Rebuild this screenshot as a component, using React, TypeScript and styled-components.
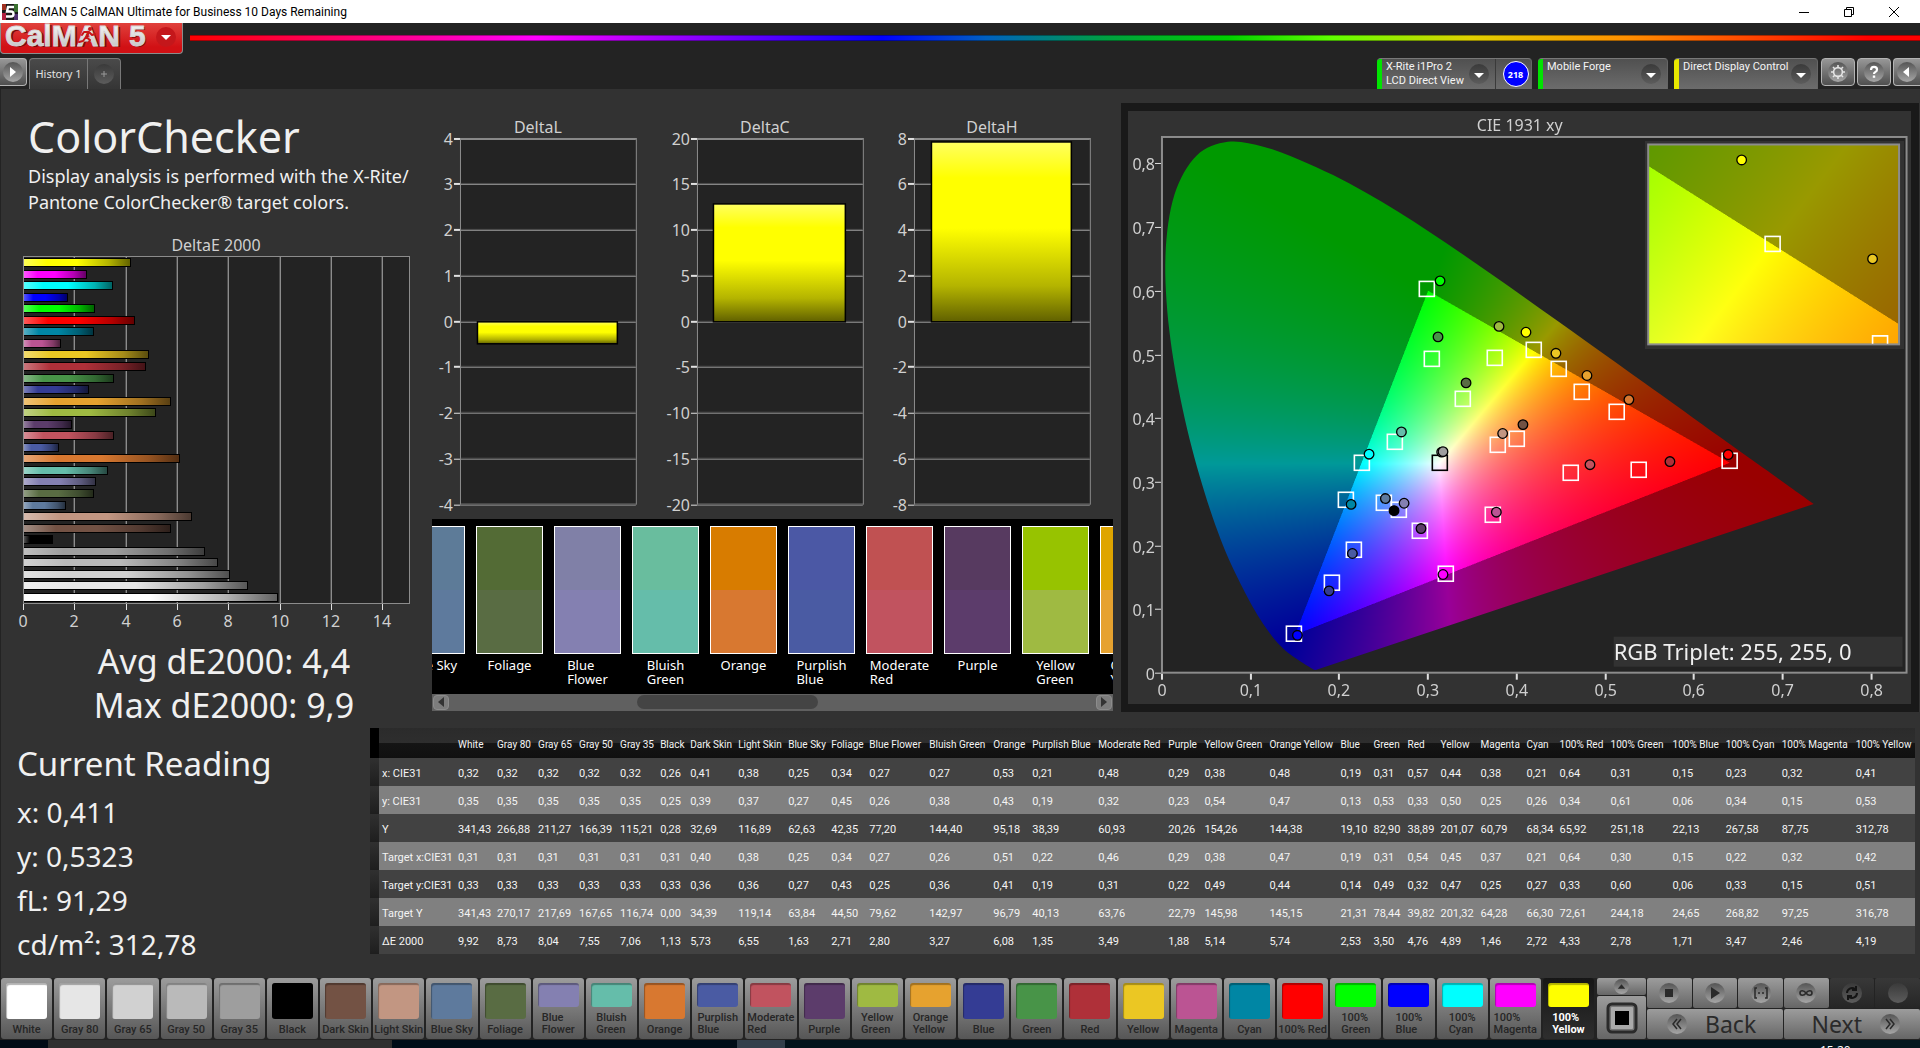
import React, { useEffect, useRef } from "react";
import styled, { createGlobalStyle, css } from "styled-components";

const UI = `"Noto Sans", "Open Sans", sans-serif`;
const COMPACT = `Roboto, "Noto Sans", sans-serif`;

const GlobalStyle = createGlobalStyle`
  *, *::before, *::after { box-sizing: border-box; }
  body { margin: 0; background: #232323; color: #f0f0f0; font-family: ${UI}; overflow: hidden; }
  button { font-family: inherit; margin: 0; padding: 0; border: 0; color: inherit; cursor: pointer; }
  h1, h2, p { margin: 0; font-weight: 400; }
`;

/* ---------- data ---------- */

type Patch = { name: string; label?: string; color: string; top?: string; v: string[] };

const patches: Patch[] = [
  { name: "White", color: "#ffffff", v: ["0,32", "0,35", "341,43", "0,31", "0,33", "341,43", "9,92"] },
  { name: "Gray 80", color: "#e6e6e6", v: ["0,32", "0,35", "266,88", "0,31", "0,33", "270,17", "8,73"] },
  { name: "Gray 65", color: "#d1d1d1", v: ["0,32", "0,35", "211,27", "0,31", "0,33", "217,69", "8,04"] },
  { name: "Gray 50", color: "#bababa", v: ["0,32", "0,35", "166,39", "0,31", "0,33", "167,65", "7,55"] },
  { name: "Gray 35", color: "#9e9e9e", v: ["0,32", "0,35", "115,21", "0,31", "0,33", "116,74", "7,06"] },
  { name: "Black", color: "#000000", v: ["0,26", "0,25", "0,28", "0,31", "0,33", "0,00", "1,13"] },
  { name: "Dark Skin", color: "#735244", v: ["0,41", "0,39", "32,69", "0,40", "0,36", "34,39", "5,73"] },
  { name: "Light Skin", color: "#c29682", v: ["0,38", "0,37", "116,89", "0,38", "0,36", "119,14", "6,55"] },
  { name: "Blue Sky", color: "#5e7a9d", top: "#5d7b98", v: ["0,25", "0,27", "62,63", "0,25", "0,27", "63,84", "1,63"] },
  { name: "Foliage", color: "#596c43", top: "#536b35", v: ["0,34", "0,45", "42,35", "0,34", "0,43", "44,50", "2,71"] },
  { name: "Blue Flower", label: "Blue\nFlower", color: "#8480b1", top: "#8080a7", v: ["0,27", "0,26", "77,20", "0,27", "0,25", "79,62", "2,80"] },
  { name: "Bluish Green", label: "Bluish\nGreen", color: "#65bdaa", top: "#69bd9e", v: ["0,27", "0,38", "144,40", "0,26", "0,36", "142,97", "3,27"] },
  { name: "Orange", color: "#d87830", top: "#d87c00", v: ["0,53", "0,43", "95,18", "0,51", "0,41", "96,79", "6,08"] },
  { name: "Purplish Blue", label: "Purplish\nBlue", color: "#4a5ba3", top: "#4b58a5", v: ["0,21", "0,19", "38,39", "0,22", "0,19", "40,13", "1,35"] },
  { name: "Moderate Red", label: "Moderate\nRed", color: "#c1535f", top: "#c05152", v: ["0,48", "0,32", "60,93", "0,46", "0,31", "63,76", "3,49"] },
  { name: "Purple", color: "#5c3c6b", top: "#573a60", v: ["0,29", "0,23", "20,26", "0,29", "0,22", "22,79", "1,88"] },
  { name: "Yellow Green", label: "Yellow\nGreen", color: "#9fba42", top: "#97c300", v: ["0,38", "0,54", "154,26", "0,38", "0,49", "145,98", "5,14"] },
  { name: "Orange Yellow", label: "Orange\nYellow", color: "#e6a22f", top: "#dfa500", v: ["0,48", "0,47", "144,38", "0,47", "0,44", "145,15", "5,74"] },
  { name: "Blue", color: "#343c94", v: ["0,19", "0,13", "19,10", "0,19", "0,14", "21,31", "2,53"] },
  { name: "Green", color: "#489448", v: ["0,31", "0,53", "82,90", "0,31", "0,49", "78,44", "3,50"] },
  { name: "Red", color: "#af3039", v: ["0,57", "0,33", "38,89", "0,54", "0,32", "39,82", "4,76"] },
  { name: "Yellow", color: "#ebc723", v: ["0,44", "0,50", "201,07", "0,45", "0,47", "201,32", "4,89"] },
  { name: "Magenta", color: "#bb5493", v: ["0,38", "0,25", "60,79", "0,37", "0,25", "64,28", "1,46"] },
  { name: "Cyan", color: "#0086a4", v: ["0,21", "0,26", "68,34", "0,21", "0,27", "66,30", "2,72"] },
  { name: "100% Red", color: "#ff0000", v: ["0,64", "0,34", "65,92", "0,64", "0,33", "72,61", "4,33"] },
  { name: "100% Green", label: "100%\nGreen", color: "#00ff00", v: ["0,31", "0,61", "251,18", "0,30", "0,60", "244,18", "2,78"] },
  { name: "100% Blue", label: "100%\nBlue", color: "#0000ff", v: ["0,15", "0,06", "22,13", "0,15", "0,06", "24,65", "1,71"] },
  { name: "100% Cyan", label: "100%\nCyan", color: "#00ffff", v: ["0,23", "0,34", "267,58", "0,22", "0,33", "268,82", "3,47"] },
  { name: "100% Magenta", label: "100%\nMagenta", color: "#ff00ff", v: ["0,32", "0,15", "87,75", "0,32", "0,15", "97,25", "2,46"] },
  { name: "100% Yellow", label: "100%\nYellow", color: "#ffff00", v: ["0,41", "0,53", "312,78", "0,42", "0,51", "316,78", "4,19"] },
];

const rowNames = ["x: CIE31", "y: CIE31", "Y", "Target x:CIE31", "Target y:CIE31", "Target Y", "ΔE 2000"];

const columnWidths = [
  9, 76, 39, 41, 41, 41, 40, 30, 48, 50, 43, 38, 60, 64, 39, 66, 70, 36, 65, 71, 33, 34, 33, 40, 46, 33, 51, 62, 53,
  56, 74, 62,
];

const toNumber = (s: string) => parseFloat(s.replace(",", "."));

const mix = (hex: string, target: number, amount: number) => {
  const n = parseInt(hex.slice(1), 16);
  const part = (shift: number) => Math.round(((n >> shift) & 255) * (1 - amount) + target * amount);
  return `rgb(${part(16)},${part(8)},${part(0)})`;
};

/* ---------- window frame ---------- */

const Window = styled.div`
  display: flex;
  flex-direction: column;
  height: 100vh;
  background: #232323;
`;

const TitleBar = styled.header`
  display: flex;
  align-items: center;
  height: 23px;
  padding: 0 4px 0 2px;
  background: #fff;
  color: #000;
`;

const TitleText = styled.span`
  flex: 1;
  padding-left: 5px;
  font-family: ${COMPACT};
  font-size: 12px;
`;

const CaptionButton = styled.button`
  display: flex;
  align-items: center;
  justify-content: center;
  width: 45px;
  height: 20px;
  background: transparent;
`;

const Brand = styled.div`
  display: flex;
  align-items: center;
  height: 31px;
`;

const LogoButton = styled.button`
  display: block;
  width: 183px;
  height: 31px;
  background: linear-gradient(#e0413c, #d11014 80%);
  border: 1px solid #8c8c8c;
  border-top: 0;
  border-radius: 0 0 4px 4px;
  overflow: hidden;
`;

const Rainbow = styled.div`
  flex: 1;
  height: 6px;
  margin: 0 0 1px 7px;
  border: solid rgba(0, 0, 0, 0.35);
  border-width: 1px 0;
  background: linear-gradient(90deg, #ff0000 0%, #ff00a8 14%, #ff00ff 20%, #8000ff 30%, #0000ff 40%, #0060c0 46%, #00a040 53%, #00d000 60%, #60ff00 66%, #e0d000 74%, #ff9000 83%, #ff0000 97%) border-box;
`;

const TabRow = styled.nav`
  display: flex;
  align-items: flex-end;
  height: 35px;
`;

const silver = css`
  background: linear-gradient(#979797, #4f4f4f);
  border: 1px solid #b4b4b4;
  border-radius: 4px;
`;

const ToolButton = styled.button<{ $w: number; $side?: "left" | "right" }>`
  ${silver}
  display: flex;
  align-items: center;
  justify-content: center;
  align-self: flex-start;
  width: ${(p) => p.$w}px;
  height: 28px;
  margin-top: 4px;
  ${(p) => p.$side === "left" && "border-left: 0; border-radius: 0 4px 4px 0;"}
  ${(p) => p.$side === "right" && "border-right: 0; border-radius: 4px 0 0 4px;"}
`;

const HistoryTabs = styled.div`
  display: flex;
  height: 31px;
  margin-left: 2px;
  border: 1px solid #787878;
  border-bottom: 0;
  border-radius: 4px 4px 0 0;
  background: linear-gradient(#4a4a4a, #353535);
`;

const HistoryTab = styled.button`
  width: 58px;
  padding-bottom: 2px;
  background: transparent;
  border-right: 1px solid #787878;
  color: #e2e2e2;
  font-size: 11px;
`;

const AddTab = styled.button`
  display: flex;
  align-items: center;
  justify-content: center;
  width: 32px;
  background: transparent;
`;

const Devices = styled.div`
  display: flex;
  flex: 1;
  justify-content: flex-end;
  align-items: flex-end;
  gap: 6px;
`;

const DeviceTab = styled.div<{ $w: number }>`
  display: flex;
  width: ${(p) => p.$w}px;
  height: 31px;
  border-top: 1px solid #787878;
  border-right: 1px solid #666;
  border-radius: 4px 4px 0 0;
  background: linear-gradient(#505050, #6c6c6c);
  overflow: hidden;
`;

const Status = styled.span<{ $color: string }>`
  width: 5px;
  background: ${(p) => p.$color};
`;

const DeviceName = styled.button`
  display: flex;
  flex: 1;
  align-items: center;
  justify-content: space-between;
  padding: 0 6px 0 4px;
  background: transparent;
  color: #f4f4f4;
  font-family: ${COMPACT};
  font-size: 11px;
  line-height: 14px;
  text-align: left;
  white-space: nowrap;
`;

const DeviceLines = styled.span`
  align-self: flex-start;
  width: 78px;
  padding-top: 1px;
  white-space: pre;
`;

const Counter = styled.div`
  display: flex;
  align-items: center;
  justify-content: center;
  width: 36px;
  padding-left: 4px;
  border-left: 1px solid #3a3a3a;
`;

const CounterDisc = styled.span`
  display: flex;
  align-items: center;
  justify-content: center;
  width: 26px;
  height: 26px;
  border: 1px solid #fff;
  border-radius: 50%;
  background: #0000ff;
  color: #fff;
  font-size: 9px;
  font-weight: 700;
`;

const Tools = styled.div`
  display: flex;
  align-self: stretch;
  gap: 2px;
  margin-left: 3px;
`;

/* ---------- page ---------- */

const Page = styled.main`
  display: flex;
  flex: 1;
  flex-direction: column;
  min-height: 0;
  background: #323232;
  border-left: 1px solid #232323;
`;

const Upper = styled.section`
  display: grid;
  grid-template-columns: 424px minmax(0, 696fr) minmax(0, 798fr);
  align-items: start;
`;

const Intro = styled.div`
  padding: 22px 0 0 27px;
`;

const Heading = styled.h1`
  font-size: 43px;
  line-height: 52px;
`;

const Lead = styled.p`
  font-size: 18px;
  line-height: 26px;
  white-space: nowrap;
`;

const DeltaEBox = styled.figure`
  margin: 21px 0 13px -28px;
`;

const Chart = styled.svg`
  display: block;
  width: 100%;
  height: auto;
  font-family: ${UI};
  font-size: 16px;
  fill: #d0d0d0;
`;

const Summary = styled.div`
  display: flex;
  flex-direction: column;
  align-items: center;
  gap: 12px;
  padding-right: 4px;
  margin-left: -27px;
  width: 450px;
`;

const Big = styled.p`
  font-size: 34px;
  line-height: 32px;
`;

const Middle = styled.div`
  padding: 22px 8px 0 0;
`;

const DeltaRow = styled.div`
  display: grid;
  grid-template-columns: repeat(3, minmax(0, 1fr));
  padding-right: 8px;
`;

const Strip = styled.div`
  margin-left: 7px;
  background: #000;
  overflow: hidden;
`;

const StripTrack = styled.div`
  display: flex;
  gap: 11px;
  height: 175px;
  margin-left: -34px;
  padding-top: 7px;
`;

const Pair = styled.div`
  display: flex;
  flex: none;
  flex-direction: column;
  align-items: center;
  width: 67px;
`;

const PairColors = styled.div<{ $top: string; $bottom: string }>`
  width: 100%;
  height: 128px;
  border: 1px solid #fff;
  background: linear-gradient(${(p) => p.$top} 50%, ${(p) => p.$bottom} 50%);
`;

const PairLabel = styled.span`
  margin-top: 4px;
  color: #fff;
  font-size: 13px;
  line-height: 14px;
  white-space: pre;
`;

const ScrollBar = styled.div`
  display: flex;
  align-items: center;
  justify-content: space-between;
  height: 17px;
  padding: 0 1px;
  background: #606060;
`;

const ScrollArrow = styled.button`
  display: flex;
  align-items: center;
  justify-content: center;
  width: 16px;
  height: 15px;
  border: 1px solid #8c8c8c;
  border-radius: 4px;
  background: #7c7c7c;
`;

const ScrollRail = styled.div`
  flex: 1;
  height: 14px;
`;

const ScrollThumb = styled.div`
  width: 28%;
  height: 14px;
  margin-left: 29%;
  border-radius: 7px;
  background: #444;
`;

const CiePanel = styled.figure`
  display: grid;
  margin: 14px 1px 0 0;
  padding: 0;
  border: solid #191919;
  border-width: 8px 8px 8px 7px;
`;

const CieCanvas = styled.canvas`
  grid-area: 1 / 1;
  width: 100%;
  height: auto;
`;

const CieOverlay = styled(Chart)`
  grid-area: 1 / 1;
`;

const Lower = styled.section`
  display: flex;
  align-items: flex-start;
  padding: 7px 5px 0 0;
`;

const Reading = styled.div`
  flex: none;
  width: 369px;
  padding: 14px 0 0 16px;
`;

const ReadingTitle = styled.h2`
  margin-bottom: 4px;
  font-size: 33px;
  line-height: 44px;
`;

const ReadingLine = styled.p`
  font-size: 28px;
  line-height: 44px;
`;

const Table = styled.table`
  flex: 1;
  width: 100%;
  table-layout: fixed;
  border-collapse: collapse;
  font-family: ${COMPACT};
  color: #f4f4f4;
`;

const HeadCell = styled.th<{ $strip?: boolean }>`
  height: 30px;
  padding: 2px 0 0 3px;
  background: ${(p) => (p.$strip ? "#000" : "linear-gradient(#2b2b2b, #2e2e2e 50%, #151515 50%, #101010)")};
  font-size: 10px;
  font-weight: 400;
  text-align: left;
  white-space: nowrap;
`;

const Row = styled.tr`
  height: 28px;
  background: #424242;
  &:nth-child(even) {
    background: #808080;
  }
`;

const StripCell = styled.td`
  padding: 0;
  background: linear-gradient(#303030, #1e1e1e);
`;

const RowHead = styled.th`
  padding: 2px 0 0 3px;
  font-size: 11px;
  font-weight: 400;
  text-align: left;
  white-space: nowrap;
`;

const Cell = styled.td`
  padding: 2px 0 0 3px;
  font-size: 11px;
  white-space: nowrap;
`;

/* ---------- footer ---------- */

const Footer = styled.footer`
  display: flex;
  height: 61px;
  gap: 1px;
  background: #232323;
`;

const PatchBar = styled.div`
  display: grid;
  flex: 1;
  grid-template-columns: repeat(30, minmax(0, 1fr));
  gap: 2px;
  padding: 0 2px 0 1px;
`;

const PatchButton = styled.button<{ $active?: boolean }>`
  display: flex;
  flex-direction: column;
  align-items: center;
  padding: 5px 0 3px;
  border-radius: 3px;
  background: ${(p) => (p.$active ? "linear-gradient(#161616, #2e2e2e)" : "linear-gradient(#9c9c9c, #565656)")};
  color: ${(p) => (p.$active ? "#fff" : "#262626")};
  font-family: ${COMPACT};
  font-size: 11px;
  font-weight: ${(p) => (p.$active ? 700 : 500)};
  line-height: 12px;
  text-align: left;
  white-space: pre;
`;

const PatchColor = styled.span<{ $color: string }>`
  flex: 1;
  width: 80%;
  margin-bottom: 5px;
  border-radius: 3px;
  background: ${(p) => p.$color};
  box-shadow: inset 1px 2px 1px rgba(0, 0, 0, 0.3);
`;

const PickerColumn = styled.div`
  display: flex;
  flex-direction: column;
  gap: 1px;
  width: 49px;
`;

const MetalButton = styled.button<{ $h?: number; $dark?: boolean }>`
  display: flex;
  align-items: center;
  justify-content: center;
  ${(p) => (p.$h ? `height: ${p.$h}px;` : "flex: 1;")}
  background: ${(p) => (p.$dark ? "linear-gradient(#383838, #262626)" : "linear-gradient(#9c9c9c, #666)")};
  border-radius: 2px;
`;

const Transport = styled.div`
  display: flex;
  flex-direction: column;
  gap: 1px;
  width: 273px;
`;

const TransportRow = styled.div`
  display: flex;
  flex: 1;
  gap: 1px;
`;

const NavButton = styled(MetalButton)<{ $to: "back" | "next" }>`
  justify-content: ${(p) => (p.$to === "back" ? "flex-start" : "flex-end")};
  gap: 18px;
  padding: 0 20px;
  color: #2a2a2a;
  font-size: 23px;
  line-height: 28px;
`;

const Taskbar = styled.div`
  display: flex;
  flex: none;
  height: 9px;
  padding-top: 1px;
  background: #232323;
  overflow: hidden;
`;

const TaskSegment = styled.span<{ $grow: number; $color: string }>`
  flex: ${(p) => p.$grow} 1 0;
  background: ${(p) => p.$color};
`;

const Clock = styled.span`
  width: 100px;
  padding-top: 3px;
  background: #05181f;
  color: #fff;
  font-size: 12px;
  line-height: 16px;
`;

/* ---------- icons ---------- */

const Orb = ({ size = 20, dark, children }: { size?: number; dark?: boolean; children?: React.ReactNode }) => (
  <svg width={size} height={size} viewBox="0 0 20 20" aria-hidden="true">
    <defs>
      <linearGradient id={dark ? "orbDark" : "orbLight"} x1="0" y1="0" x2="0" y2="1">
        <stop offset="0" stopColor={dark ? "#3a3a3a" : "#555"} />
        <stop offset="1" stopColor={dark ? "#5c5c5c" : "#a6a6a6"} />
      </linearGradient>
    </defs>
    <circle cx="10" cy="10" r="10" fill={`url(#${dark ? "orbDark" : "orbLight"})`} />
    {children}
  </svg>
);

const DownArrow = () => (
  <Orb dark>
    <path d="M5 9h10l-5 5z" fill="#fff" />
  </Orb>
);

const Logo = () => (
  <svg width="181" height="30" viewBox="0 0 181 30" aria-label="CalMAN 5">
    <defs>
      <linearGradient id="silver" x1="0" y1="0" x2="0" y2="1">
        <stop offset="0" stopColor="#ffffff" />
        <stop offset="1" stopColor="#bdbdbd" />
      </linearGradient>
    </defs>
    <g fontFamily="Liberation Sans" fontWeight="700" fontSize="30">
      <text x="6" y="24" fill="#7a0a0c">CalMAN</text>
      <text x="129" y="24" fill="#7a0a0c">5</text>
      <text x="4" y="23" fill="url(#silver)" stroke="#d8d8d8" strokeWidth="0.8">CalMAN</text>
      <text x="128" y="23" fill="url(#silver)" stroke="#d8d8d8" strokeWidth="0.8">5</text>
    </g>
    <g stroke="#c91518" strokeWidth="2" fill="none" strokeLinecap="round" strokeLinejoin="round">
      <path d="M88 9l-3 5 4 3-2 4M85 14l-3 4-4 1M88 9h-5l-2 3M88 9l3 3 3-1" />
    </g>
    <circle cx="89" cy="6" r="2" fill="#c91518" />
    <circle cx="165" cy="14" r="10" fill="#c4171b" />
    <path d="M160 12h10l-5 5z" fill="#fff" />
  </svg>
);

/* ---------- charts ---------- */

const DELTA_E_SCALE = 25.65;

const DeltaEChart = () => (
  <Chart viewBox="0 0 425 396" role="img" aria-label="DeltaE 2000">
    <defs>
      {patches.map((p, i) => (
        <linearGradient key={p.name} id={`bar${i}`}>
          <stop offset="0" stopColor={mix(p.color, 255, 0.35)} />
          <stop offset="0.22" stopColor={p.color} />
          <stop offset="0.5" stopColor={p.color} />
          <stop offset="0.8" stopColor={mix(p.color, 0, 0.3)} />
          <stop offset="1" stopColor={mix(p.color, 0, 0.62)} />
        </linearGradient>
      ))}
    </defs>
    <text x="216" y="15" textAnchor="middle">DeltaE 2000</text>
    <rect x="23.5" y="20.5" width="386" height="347" fill="#232323" stroke="#8c8c8c" />
    {[0, 2, 4, 6, 8, 10, 12, 14].map((t) => {
      const x = Math.round(23 + t * DELTA_E_SCALE);
      return (
        <g key={t}>
          {t > 0 && <rect x={x} y="21" width="1" height="346" fill="#8c8c8c" />}
          {t > 0 && <rect x={x - 1} y="21" width="1" height="346" fill="#4c4c4c" />}
          <rect x={x} y="368" width="1" height="6" fill="#e0e0e0" />
          <text x={x} y="391" textAnchor="middle">{t}</text>
        </g>
      );
    })}
    {patches.map((p, i) => {
      const y = Math.round(26 + (29 - i) * 11.55);
      return (
        <rect key={p.name} x="23.5" y={y - 3.5} width={Math.round(toNumber(p.v[6]) * DELTA_E_SCALE)} height="8"
          fill={`url(#bar${i})`} stroke="#000" />
      );
    })}
    <rect x="23" y="21" width="1" height="347" fill="#8c8c8c" />
  </Chart>
);

type DeltaProps = { title: string; left: number; step: number; value: number };

const DeltaChart = ({ title, left, step, value }: DeltaProps) => {
  const right = 211;
  const unit = 183 / (4 * step);
  const zero = 210.6;
  const end = Math.round(zero - value * unit);
  const base = Math.round(zero);
  const inset = Math.round((right - left) * 0.1);
  const id = `delta-${title}`;
  return (
    <Chart viewBox="0 0 227 408" role="img" aria-label={title}>
      <defs>
        <linearGradient id={id} x1="0" y1="0" x2="0" y2="1">
          <stop offset="0" stopColor="#ffff60" />
          <stop offset="0.2" stopColor="#ffff00" />
          <stop offset="0.48" stopColor="#ffff00" />
          <stop offset="0.8" stopColor="#b4b400" />
          <stop offset="1" stopColor="#606000" />
        </linearGradient>
      </defs>
      <text x="113" y="22" textAnchor="middle">{title}</text>
      <rect x={left + 0.5} y="27.5" width={right - left} height="366" fill="#232323" stroke="#8c8c8c" />
      {[4, 3, 2, 1, 0, -1, -2, -3, -4].map((k) => {
        const y = Math.floor(zero + 0.4 - k * step * unit);
        return (
          <g key={k}>
            <rect x={left} y={y} width={right - left} height="1" fill="#8c8c8c" />
            {k < 4 && <rect x={left + 1} y={y - 1} width={right - left - 1} height="1" fill="#505050" />}
            <rect x={left - 6} y={y - (k > -2 ? 1 : 0)} width="6" height={k > -2 ? 2 : 1} fill="#e0e0e0" />
            <text x={left - 7} y={y + 6} textAnchor="end">{k * step}</text>
          </g>
        );
      })}
      <rect x={left + inset - 0.5} y={Math.min(base, end)} width={right - left - 2 * inset}
        height={Math.abs(end - base)} fill={`url(#${id})`} stroke="#000" strokeWidth="1.5" />
    </Chart>
  );
};

/* Spectral locus, 1931 2° observer, 380–700 nm */
const locus: [number, number][] = [
  [0.1741, 0.005], [0.1738, 0.0049], [0.1733, 0.0048], [0.1726, 0.0048], [0.1714, 0.0051], [0.1689, 0.0069],
  [0.1644, 0.0109], [0.1566, 0.0177], [0.144, 0.0297], [0.1355, 0.0399], [0.1241, 0.0578], [0.1096, 0.0868],
  [0.0913, 0.1327], [0.0687, 0.2007], [0.0454, 0.295], [0.0235, 0.4127], [0.0082, 0.5384], [0.0039, 0.6548],
  [0.0139, 0.7502], [0.0389, 0.812], [0.0743, 0.8338], [0.1142, 0.8262], [0.1547, 0.8059], [0.1929, 0.7816],
  [0.2296, 0.7543], [0.2658, 0.7243], [0.3016, 0.6923], [0.3373, 0.6589], [0.3731, 0.6245], [0.4087, 0.5896],
  [0.4441, 0.5547], [0.4788, 0.5202], [0.5125, 0.4866], [0.5448, 0.4544], [0.5752, 0.4242], [0.6029, 0.3965],
  [0.627, 0.3725], [0.6482, 0.3514], [0.6658, 0.334], [0.6801, 0.3197], [0.6915, 0.3083], [0.7079, 0.292],
  [0.719, 0.2809], [0.726, 0.274], [0.7347, 0.2653],
];

const CIE = { w: 783, h: 593, left: 34, top: 26, right: 779, bottom: 562, sx: 887, sy: 637 };
const INSET = { x: 521, y: 34, w: 251, h: 200, sx: 3900, sy: 3100, cx: 644, cy: 133, x0: 0.4193, y0: 0.5053 };

const px = (x: number) => CIE.left + x * CIE.sx;
const py = (y: number) => CIE.bottom - y * CIE.sy;

const shade = (x: number, y: number): [number, number, number] => {
  const X = x / y;
  const Z = (1 - x - y) / y;
  const r = 3.2406 * X - 1.5372 - 0.4986 * Z;
  const g = -0.9689 * X + 1.8758 + 0.0415 * Z;
  const b = 0.0557 * X - 0.204 + 1.057 * Z;
  const k = (255 / Math.max(r, g, b)) * (Math.min(r, g, b) < 0 ? 0.6 : 1);
  return [Math.max(0, r) * k, Math.max(0, g) * k, Math.max(0, b) * k];
};

const renderField = (w: number, h: number, toXY: (i: number, j: number) => [number, number]) => {
  const ratio = 2;
  const field = document.createElement("canvas");
  field.width = w * ratio;
  field.height = h * ratio;
  const ctx = field.getContext("2d")!;
  const img = ctx.createImageData(field.width, field.height);
  for (let j = 0; j < field.height; j++) {
    for (let i = 0; i < field.width; i++) {
      const [x, y] = toXY((i + 0.5) / ratio, (j + 0.5) / ratio);
      const [r, g, b] = shade(x, Math.max(y, 0.0005));
      const o = (j * field.width + i) * 4;
      img.data[o] = r;
      img.data[o + 1] = g;
      img.data[o + 2] = b;
      img.data[o + 3] = 255;
    }
  }
  ctx.putImageData(img, 0, 0);
  return field;
};

type Mark = [number, number, string?];

const targets: Mark[] = [
  [0.299, 0.6026], [0.3047, 0.4925], [0.3757, 0.4943], [0.3396, 0.4295], [0.2626, 0.3616], [0.2253, 0.3291],
  [0.2077, 0.271], [0.2498, 0.2667], [0.2674, 0.2551], [0.2907, 0.2221], [0.2167, 0.1921], [0.1919, 0.1407],
  [0.3204, 0.1542], [0.149, 0.0612], [0.3734, 0.2478], [0.379, 0.3573], [0.4001, 0.3665], [0.4196, 0.5066],
  [0.4478, 0.4766], [0.4738, 0.4411], [0.5132, 0.4087], [0.4614, 0.3132], [0.538, 0.3175], [0.6402, 0.3316],
  [0.3137, 0.3291, "#000"],
];

const measured: Mark[] = [
  [0.3137, 0.6155, "#00ff00"], [0.3114, 0.5274, "#489448"], [0.3802, 0.5439, "#9fba42"], [0.343, 0.4552, "#596c43"],
  [0.2701, 0.3781, "#65bdaa"], [0.2336, 0.3432, "#00ffff"], [0.3155, 0.3465, "#e6e6e6"], [0.317, 0.3472, "#9e9e9e"],
  [0.2133, 0.2643, "#0086a4"], [0.252, 0.2735, "#5e7a9d"], [0.2618, 0.2545, "#000000"], [0.2731, 0.2661, "#8480b1"],
  [0.2922, 0.2264, "#5c3c6b"], [0.2148, 0.1872, "#4a5ba3"], [0.1885, 0.1285, "#343c94"], [0.317, 0.1542, "#ff00ff"],
  [0.1528, 0.0587, "#0000ff"], [0.3772, 0.2521, "#bb5493"], [0.3843, 0.3757, "#c29682"], [0.4072, 0.3897, "#735244"],
  [0.4106, 0.5347, "#ffff00"], [0.4444, 0.5017, "#ebc723"], [0.4794, 0.4668, "#e6a22f"], [0.5267, 0.4289, "#d87830"],
  [0.4828, 0.3267, "#c1535f"], [0.573, 0.3316, "#af3039"], [0.6387, 0.3426, "#ff0000"],
];

const Target = ({ x, y, color = "#fff" }: { x: number; y: number; color?: string }) => (
  <rect x={Math.round(x) - 7.5} y={Math.floor(y) - 7.5} width="15" height="15" fill="none" stroke={color} strokeWidth="1.6" />
);

const Dot = ({ x, y, color }: { x: number; y: number; color?: string }) => (
  <circle cx={x} cy={y} r="4.8" fill={color} stroke="#000" strokeWidth="1.3" />
);

const CieChart = () => {
  const ref = useRef<HTMLCanvasElement>(null);
  useEffect(() => {
    const ctx = ref.current!.getContext("2d")!;
    ctx.clearRect(0, 0, CIE.w, CIE.h);
    ctx.fillStyle = "#323232";
    ctx.fillRect(0, 0, CIE.w, CIE.h);
    ctx.fillStyle = "#232323";
    ctx.fillRect(CIE.left, CIE.top, CIE.right - CIE.left, CIE.bottom - CIE.top);
    ctx.save();
    ctx.beginPath();
    ctx.moveTo(px(locus[0][0]), py(locus[0][1]));
    for (let i = 0; i < locus.length - 1; i++) {
      const p0 = locus[Math.max(0, i - 1)];
      const p1 = locus[i];
      const p2 = locus[i + 1];
      const p3 = locus[Math.min(locus.length - 1, i + 2)];
      ctx.bezierCurveTo(
        px(p1[0] + (p2[0] - p0[0]) / 6), py(p1[1] + (p2[1] - p0[1]) / 6),
        px(p2[0] - (p3[0] - p1[0]) / 6), py(p2[1] - (p3[1] - p1[1]) / 6),
        px(p2[0]), py(p2[1]),
      );
    }
    ctx.closePath();
    ctx.clip();
    const w = CIE.right - CIE.left;
    const h = CIE.bottom - CIE.top;
    ctx.drawImage(renderField(w, h, (i, j) => [i / CIE.sx, (h - j) / CIE.sy]), CIE.left, CIE.top, w, h);
    ctx.restore();
    ctx.fillStyle = "#323232";
    ctx.fillRect(INSET.x - 4, INSET.y - 4, INSET.w + 8, INSET.h + 8);
    const zoomed = renderField(INSET.w, INSET.h, (i, j) => [
      INSET.x0 + (i + INSET.x - INSET.cx) / INSET.sx,
      INSET.y0 - (j + INSET.y - INSET.cy) / INSET.sy,
    ]);
    ctx.drawImage(zoomed, INSET.x, INSET.y, INSET.w, INSET.h);
  }, []);

  return (
    <CiePanel>
      <CieCanvas ref={ref} width={CIE.w} height={CIE.h} />
      <CieOverlay viewBox={`0 0 ${CIE.w} ${CIE.h}`} role="img" aria-label="CIE 1931 xy">
        <text x="392" y="20" textAnchor="middle">CIE 1931 xy</text>
        <rect x={CIE.left} y={CIE.top} width={CIE.right - CIE.left} height={CIE.bottom - CIE.top} fill="none"
          stroke="#8c8c8c" strokeWidth="2" />
        {[0, 1, 2, 3, 4, 5, 6, 7, 8].map((t) => {
          const label = t === 0 ? "0" : `0,${t}`;
          const x = Math.round(px(t / 10));
          const y = Math.round(py(t / 10));
          return (
            <g key={t}>
              <rect x={CIE.left - 7} y={y} width="6" height="1" fill="#e0e0e0" />
              <text x={CIE.left - 7} y={y + 7} textAnchor="end">{label}</text>
              <rect x={x - 1} y={CIE.bottom + 1} width="2" height="6" fill="#e0e0e0" />
              <text x={x} y={CIE.bottom + 23} textAnchor="middle">{label}</text>
            </g>
          );
        })}
        {targets.map(([x, y, c], i) => <Target key={i} x={px(x)} y={py(y)} color={c} />)}
        {measured.map(([x, y, c], i) => <Dot key={i} x={px(x)} y={py(y)} color={c} />)}
        <rect x={INSET.x - 0.5} y={INSET.y - 0.5} width={INSET.w} height={INSET.h} fill="none" stroke="#8c8c8c"
          strokeWidth="2" />
        <Target x={645} y={133} />
        <path d="M745 233v-8h15v8" fill="none" stroke="#fff" strokeWidth="1.6" />
        <Dot x={614} y={49} color="#ffff00" />
        <Dot x={745} y={148} color="#ebc723" />
        <rect x="486" y="526" width="289" height="30" fill="#323232" />
        <text x="486" y="549" fontSize="22" fill="#f0f0f0">RGB Triplet: 255, 255, 0</text>
      </CieOverlay>
    </CiePanel>
  );
};

/* ---------- sections ---------- */

const DataTable = () => (
  <Table>
    <colgroup>
      {columnWidths.map((w, i) => <col key={i} style={{ width: w }} />)}
    </colgroup>
    <thead>
      <tr>
        <HeadCell $strip />
        <HeadCell />
        {patches.map((p) => <HeadCell key={p.name} scope="col">{p.name}</HeadCell>)}
      </tr>
    </thead>
    <tbody>
      {rowNames.map((name, r) => (
        <Row key={name}>
          <StripCell />
          <RowHead scope="row">{name}</RowHead>
          {patches.map((p) => <Cell key={p.name}>{p.v[r]}</Cell>)}
        </Row>
      ))}
    </tbody>
  </Table>
);

const ink = "#2a2a2a";

export default function App() {
  return (
    <Window>
      <GlobalStyle />
      <TitleBar>
        <svg width="16" height="16" viewBox="0 0 16 16" aria-hidden="true">
          <rect width="16" height="16" fill="#1a1a1a" />
          <path d="M0 0h4v6H0z" fill="#a03020" />
          <path d="M12 0h4v8h-4z" fill="#3a7030" />
          <path d="M0 9h4v7H0z" fill="#b02040" />
          <path d="M12 10h4v6h-4z" fill="#503070" />
          <path d="M12 3H6L5 7.500h4q2.500 0 2.500 2.500T9 12.500H4" fill="none" stroke="#fff" strokeWidth="2.400" />
        </svg>
        <TitleText>CalMAN 5 CalMAN Ultimate for Business 10 Days Remaining</TitleText>
        <CaptionButton aria-label="Minimize">
          <svg width="10" height="10"><path d="M0 5.5h10" stroke="#000" /></svg>
        </CaptionButton>
        <CaptionButton aria-label="Restore">
          <svg width="10" height="10" fill="none" stroke="#000"><path d="M.5 2.5h7v7h-7zM2.5 2.5v-2h7v7h-2" /></svg>
        </CaptionButton>
        <CaptionButton aria-label="Close">
          <svg width="10" height="10"><path d="M0 0l10 10M10 0L0 10" stroke="#000" /></svg>
        </CaptionButton>
      </TitleBar>

      <Brand>
        <LogoButton aria-label="CalMAN 5 menu"><Logo /></LogoButton>
        <Rainbow />
      </Brand>

      <TabRow>
        <ToolButton $w={27} $side="left" aria-label="Show workflow">
          <Orb><path d="M7 5l6 5-6 5z" fill="#fff" /></Orb>
        </ToolButton>
        <HistoryTabs>
          <HistoryTab>History 1</HistoryTab>
          <AddTab aria-label="Add history">
            <Orb dark><path d="M10 7v6M7 10h6" stroke="#999" /></Orb>
          </AddTab>
        </HistoryTabs>
        <Devices>
          <DeviceTab $w={155}>
            <Status $color="#00e400" />
            <DeviceName><DeviceLines>{"X-Rite i1Pro 2\nLCD Direct View"}</DeviceLines><DownArrow /></DeviceName>
            <Counter><CounterDisc>218</CounterDisc></Counter>
          </DeviceTab>
          <DeviceTab $w={130}>
            <Status $color="#00e400" />
            <DeviceName><DeviceLines>Mobile Forge</DeviceLines><DownArrow /></DeviceName>
          </DeviceTab>
          <DeviceTab $w={144}>
            <Status $color="#e8e800" />
            <DeviceName><DeviceLines>Direct Display Control</DeviceLines><DownArrow /></DeviceName>
          </DeviceTab>
        </Devices>
        <Tools>
          <ToolButton $w={34} aria-label="Settings">
            <Orb>
              <circle cx="10" cy="10" r="4.4" fill="none" stroke="#e4e4e4" strokeWidth="1.6" />
              <path d="M10 3v2.4M10 14.600v2.400M3 10h2.400M14.600 10h2.400M5 5l1.700 1.700M13.300 13.300L15 15M15 5l-1.700 1.700M6.700 13.300L5 15" stroke="#e4e4e4" strokeWidth="1.600" />
            </Orb>
          </ToolButton>
          <ToolButton $w={34} aria-label="Help">
            <Orb>
              <path d="M7 8q0-3.200 3-3.200t3 2.600q0 1.600-1.500 2.500T10 12" fill="none" stroke="#fff" strokeWidth="2.200" />
              <rect x="8.800" y="13.500" width="2.400" height="2.300" fill="#fff" />
            </Orb>
          </ToolButton>
          <ToolButton $w={27} $side="right" aria-label="Show panel">
            <Orb><path d="M12 5l-6 5 6 5z" fill="#fff" /></Orb>
          </ToolButton>
        </Tools>
      </TabRow>

      <Page>
        <Upper>
          <Intro>
            <Heading>ColorChecker</Heading>
            <Lead>Display analysis is performed with the X-Rite/<br />Pantone ColorChecker® target colors.</Lead>
            <DeltaEBox><DeltaEChart /></DeltaEBox>
            <Summary>
              <Big>Avg dE2000: 4,4</Big>
              <Big>Max dE2000: 9,9</Big>
            </Summary>
          </Intro>
          <Middle>
            <DeltaRow>
              <DeltaChart title="DeltaL" left={35} step={1} value={-0.5} />
              <DeltaChart title="DeltaC" left={45} step={5} value={12.8} />
              <DeltaChart title="DeltaH" left={35} step={2} value={7.85} />
            </DeltaRow>
            <Strip>
              <StripTrack>
                {patches.slice(8, 18).map((p) => (
                  <Pair key={p.name}>
                    <PairColors $top={p.top ?? p.color} $bottom={p.color} />
                    <PairLabel>{p.label ?? p.name}</PairLabel>
                  </Pair>
                ))}
              </StripTrack>
              <ScrollBar>
                <ScrollArrow aria-label="Scroll left">
                  <svg width="6" height="10"><path d="M6 0v10L0 5z" fill="#333" /></svg>
                </ScrollArrow>
                <ScrollRail><ScrollThumb /></ScrollRail>
                <ScrollArrow aria-label="Scroll right">
                  <svg width="6" height="10"><path d="M0 0v10l6-5z" fill="#333" /></svg>
                </ScrollArrow>
              </ScrollBar>
            </Strip>
          </Middle>
          <CieChart />
        </Upper>

        <Lower>
          <Reading>
            <ReadingTitle>Current Reading</ReadingTitle>
            <ReadingLine>x: 0,411</ReadingLine>
            <ReadingLine>y: 0,5323</ReadingLine>
            <ReadingLine>fL: 91,29</ReadingLine>
            <ReadingLine>cd/m²: 312,78</ReadingLine>
          </Reading>
          <DataTable />
        </Lower>
      </Page>

      <Footer>
        <PatchBar>
          {patches.map((p, i) => (
            <PatchButton key={p.name} $active={i === patches.length - 1}>
              <PatchColor $color={p.color} />
              {p.label ?? p.name}
            </PatchButton>
          ))}
        </PatchBar>
        <PickerColumn>
          <MetalButton $h={17} aria-label="Expand">
            <Orb size={15}><path d="M5 13h10l-5-6z" fill={ink} /></Orb>
          </MetalButton>
          <MetalButton aria-label="Pattern window">
            <svg width="32" height="32" viewBox="0 0 32 32">
              <rect x="2" y="2" width="28" height="28" rx="4" fill="#777" stroke={ink} strokeWidth="3" />
              <rect x="5" y="5" width="22" height="22" rx="1" fill="#aaa" />
              <rect x="9" y="9" width="14" height="14" fill="#000" />
            </svg>
          </MetalButton>
        </PickerColumn>
        <Transport>
          <TransportRow>
            <MetalButton aria-label="Stop"><Orb><path d="M6 6h8v8H6z" fill={ink} /></Orb></MetalButton>
            <MetalButton aria-label="Play"><Orb><path d="M6 4l9 6-9 6z" fill={ink} /></Orb></MetalButton>
            <MetalButton aria-label="Range">
              <Orb><path d="M6 5H4v10h2M14 5h2v10h-2M7 10h2M11 10h2" fill="none" stroke={ink} strokeWidth="1.500" /></Orb>
            </MetalButton>
            <MetalButton aria-label="Continuous">
              <Orb><path d="M10 10C8 7 4 7 4 10s4 3 6 0 6-3 6 0-4 3-6 0z" fill="none" stroke={ink} strokeWidth="1.600" /></Orb>
            </MetalButton>
            <MetalButton $dark aria-label="Repeat">
              <Orb dark><path d="M5 10a5 5 0 0 1 8-4M15 10a5 5 0 0 1-8 4M14 3v4h-4M6 17v-4h4" fill="none" stroke="#141414" strokeWidth="2" /></Orb>
            </MetalButton>
            <MetalButton $dark aria-label="Auto"><Orb dark /></MetalButton>
          </TransportRow>
          <TransportRow>
            <NavButton $to="back">
              <Orb><path d="M10 5l-4 5 4 5M14 5l-4 5 4 5" fill="none" stroke={ink} strokeWidth="1.500" /></Orb>
              Back
            </NavButton>
            <NavButton $to="next">
              Next
              <Orb><path d="M6 5l4 5-4 5M10 5l4 5-4 5" fill="none" stroke={ink} strokeWidth="1.500" /></Orb>
            </NavButton>
          </TransportRow>
        </Transport>
      </Footer>
      <Taskbar>
        <TaskSegment $grow={48} $color="#020b16" />
        <TaskSegment $grow={344} $color="#2f2f2f" />
        <TaskSegment $grow={345} $color="#000d18" />
        <TaskSegment $grow={48} $color="#333f4b" />
        <TaskSegment $grow={1035} $color="#03131b" />
        <Clock>15:20</Clock>
      </Taskbar>
    </Window>
  );
}
